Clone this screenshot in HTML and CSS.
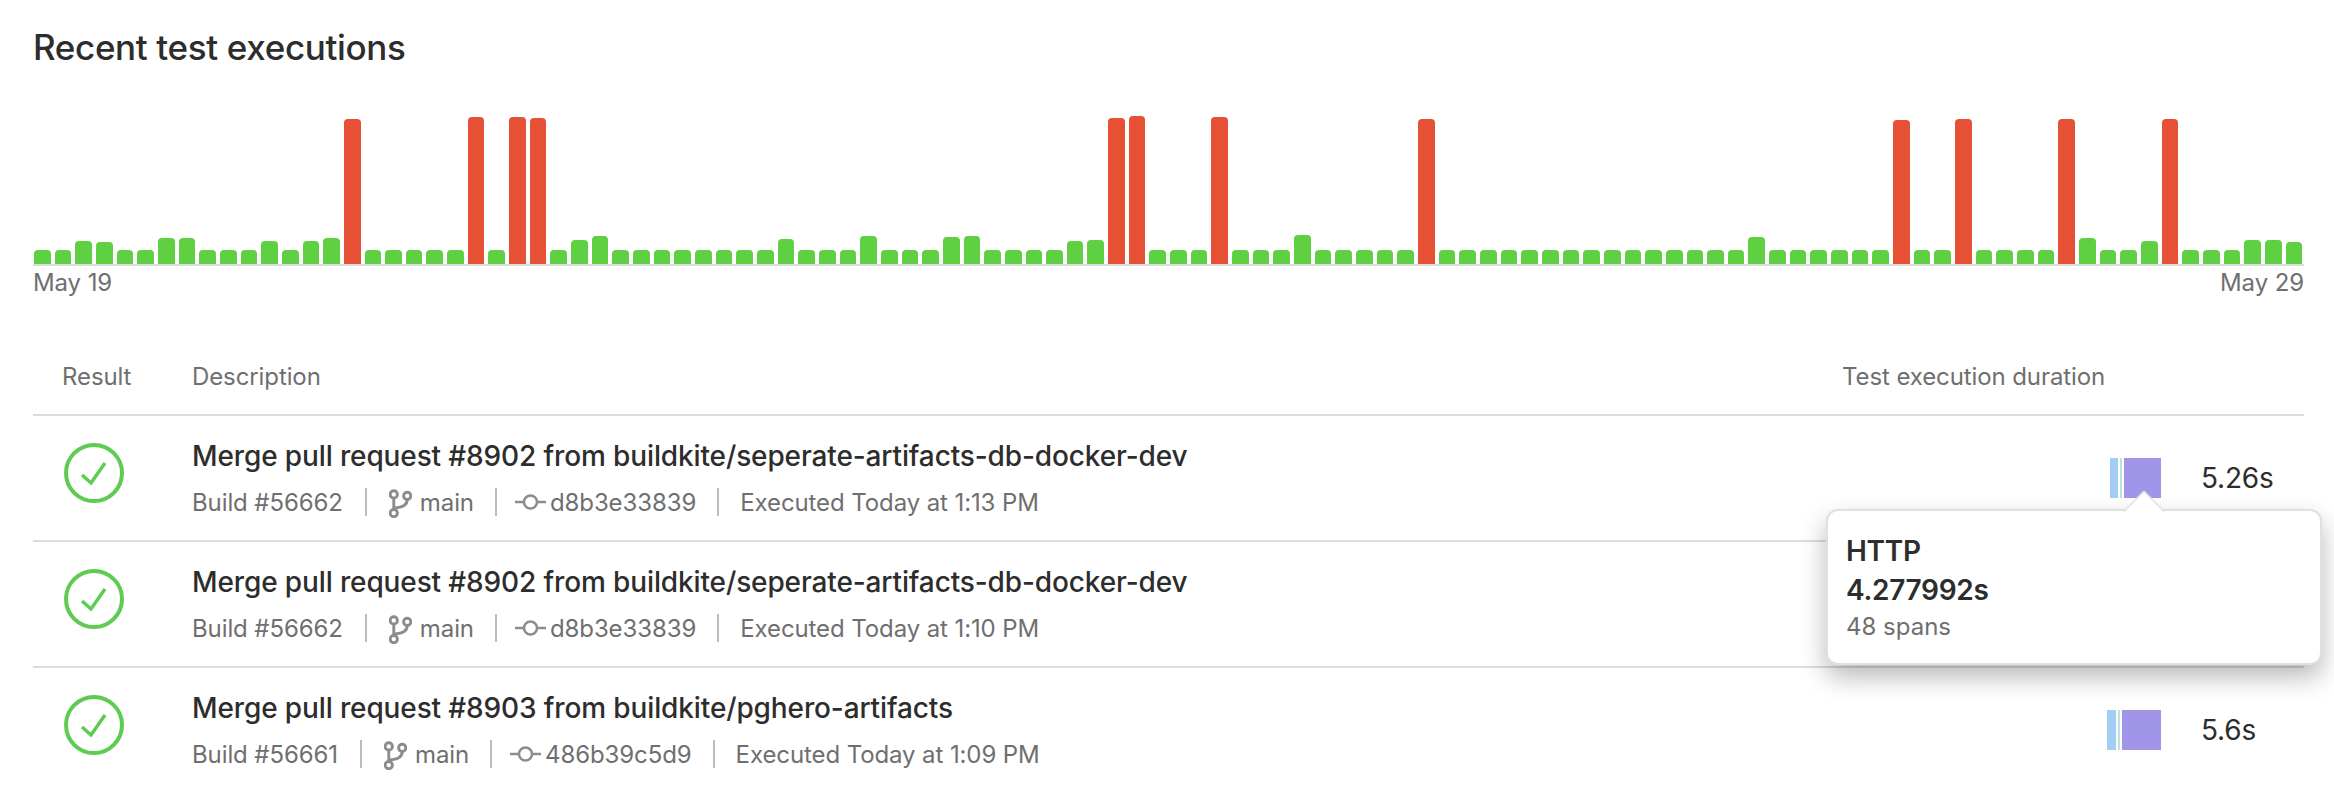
FILE: index.html
```html
<!DOCTYPE html>
<html lang="en">
<head>
<meta charset="utf-8">
<title>Recent test executions</title>
<link rel="stylesheet" href="styles.css">
</head>
<body>
<main class="page">
  <h1 class="heading">Recent test executions</h1>
  <section class="chart">
    <div class="bars">
      <i class="bar"></i><i class="bar"></i><i class="bar" style="height:23px"></i><i class="bar" style="height:22px"></i><i class="bar"></i><i class="bar"></i><i class="bar" style="height:26px"></i><i class="bar" style="height:26px"></i><i class="bar"></i><i class="bar"></i>
      <i class="bar"></i><i class="bar" style="height:23px"></i><i class="bar"></i><i class="bar" style="height:23px"></i><i class="bar" style="height:26px"></i><i class="bar fail" style="height:145px"></i><i class="bar"></i><i class="bar"></i><i class="bar"></i><i class="bar"></i>
      <i class="bar"></i><i class="bar fail" style="height:147px"></i><i class="bar"></i><i class="bar fail" style="height:147px"></i><i class="bar fail" style="height:146px"></i><i class="bar"></i><i class="bar" style="height:24px"></i><i class="bar" style="height:28px"></i><i class="bar"></i><i class="bar"></i>
      <i class="bar"></i><i class="bar"></i><i class="bar"></i><i class="bar"></i><i class="bar"></i><i class="bar"></i><i class="bar" style="height:25px"></i><i class="bar"></i><i class="bar"></i><i class="bar"></i>
      <i class="bar" style="height:28px"></i><i class="bar"></i><i class="bar"></i><i class="bar"></i><i class="bar" style="height:27px"></i><i class="bar" style="height:28px"></i><i class="bar"></i><i class="bar"></i><i class="bar"></i><i class="bar"></i>
      <i class="bar" style="height:23px"></i><i class="bar" style="height:24px"></i><i class="bar fail" style="height:146px"></i><i class="bar fail" style="height:148px"></i><i class="bar"></i><i class="bar"></i><i class="bar"></i><i class="bar fail" style="height:147px"></i><i class="bar"></i><i class="bar"></i>
      <i class="bar"></i><i class="bar" style="height:29px"></i><i class="bar"></i><i class="bar"></i><i class="bar"></i><i class="bar"></i><i class="bar"></i><i class="bar fail" style="height:145px"></i><i class="bar"></i><i class="bar"></i>
      <i class="bar"></i><i class="bar"></i><i class="bar"></i><i class="bar"></i><i class="bar"></i><i class="bar"></i><i class="bar"></i><i class="bar"></i><i class="bar"></i><i class="bar"></i>
      <i class="bar"></i><i class="bar"></i><i class="bar"></i><i class="bar" style="height:27px"></i><i class="bar"></i><i class="bar"></i><i class="bar"></i><i class="bar"></i><i class="bar"></i><i class="bar"></i>
      <i class="bar fail" style="height:144px"></i><i class="bar"></i><i class="bar"></i><i class="bar fail" style="height:145px"></i><i class="bar"></i><i class="bar"></i><i class="bar"></i><i class="bar"></i><i class="bar fail" style="height:145px"></i><i class="bar" style="height:26px"></i>
      <i class="bar"></i><i class="bar"></i><i class="bar" style="height:23px"></i><i class="bar fail" style="height:145px"></i><i class="bar"></i><i class="bar"></i><i class="bar"></i><i class="bar" style="height:24px"></i><i class="bar" style="height:24px"></i><i class="bar" style="height:22px"></i>
    </div>
    <div class="axis"><span>May 19</span><span>May 29</span></div>
  </section>

  <section class="table">
    <div class="row head">
      <div class="head-result">Result</div>
      <div>Description</div>
      <div>Test execution duration</div>
    </div>

    <div class="row item">
      <svg class="status" viewBox="0 0 60 60" aria-hidden="true"><circle cx="30" cy="30" r="28" /><path d="M18 32l9 8 14-20" /></svg>
      <div class="desc">
        <div class="title">Merge pull request #8902 from buildkite/seperate-artifacts-db-docker-dev</div>
        <div class="meta">
          <span class="cell">Build #56662</span>
          <span class="cell"><svg class="icon-branch" viewBox="0 0 24 30" aria-hidden="true"><circle cx="5" cy="5.500" r="3.800" /><circle cx="5" cy="25" r="3.800" /><circle cx="19" cy="7" r="3.800" /><path d="M5 9.300v11.900M19 10.800c0 6-4 8-14 9" /></svg>main</span>
          <span class="cell cell-commit"><svg class="icon-commit" viewBox="0 0 31 16" aria-hidden="true"><circle cx="15.500" cy="8" r="6.500" /><path d="M0 8h9M22 8h9" /></svg>d8b3e33839</span>
          <span class="cell">Executed Today at 1:13 PM</span>
        </div>
      </div>
      <div class="duration">
        <div class="spans">
          <i class="span http-a" style="width:8px"></i><i class="span sql" style="width:2px"></i><i class="span http" style="width:37px"></i>
        </div>
        <div class="time">5.26s</div>
        <div class="tooltip">
          <div class="tip-strong">HTTP</div>
          <div class="tip-strong">4.277992s</div>
          <div class="tip-note">48 spans</div>
        </div>
      </div>
    </div>

    <div class="row item">
      <svg class="status" viewBox="0 0 60 60" aria-hidden="true"><circle cx="30" cy="30" r="28" /><path d="M18 32l9 8 14-20" /></svg>
      <div class="desc">
        <div class="title">Merge pull request #8902 from buildkite/seperate-artifacts-db-docker-dev</div>
        <div class="meta">
          <span class="cell">Build #56662</span>
          <span class="cell"><svg class="icon-branch" viewBox="0 0 24 30" aria-hidden="true"><circle cx="5" cy="5.500" r="3.800" /><circle cx="5" cy="25" r="3.800" /><circle cx="19" cy="7" r="3.800" /><path d="M5 9.300v11.900M19 10.800c0 6-4 8-14 9" /></svg>main</span>
          <span class="cell cell-commit"><svg class="icon-commit" viewBox="0 0 31 16" aria-hidden="true"><circle cx="15.500" cy="8" r="6.500" /><path d="M0 8h9M22 8h9" /></svg>d8b3e33839</span>
          <span class="cell">Executed Today at 1:10 PM</span>
        </div>
      </div>
      <div class="duration"></div>
    </div>

    <div class="row item last">
      <svg class="status" viewBox="0 0 60 60" aria-hidden="true"><circle cx="30" cy="30" r="28" /><path d="M18 32l9 8 14-20" /></svg>
      <div class="desc">
        <div class="title">Merge pull request #8903 from buildkite/pghero-artifacts</div>
        <div class="meta">
          <span class="cell">Build #56661</span>
          <span class="cell"><svg class="icon-branch" viewBox="0 0 24 30" aria-hidden="true"><circle cx="5" cy="5.500" r="3.800" /><circle cx="5" cy="25" r="3.800" /><circle cx="19" cy="7" r="3.800" /><path d="M5 9.300v11.900M19 10.800c0 6-4 8-14 9" /></svg>main</span>
          <span class="cell cell-commit"><svg class="icon-commit" viewBox="0 0 31 16" aria-hidden="true"><circle cx="15.500" cy="8" r="6.500" /><path d="M0 8h9M22 8h9" /></svg>486b39c5d9</span>
          <span class="cell">Executed Today at 1:09 PM</span>
        </div>
      </div>
      <div class="duration">
        <div class="spans">
          <i class="span http-a" style="width:9px"></i><i class="span sql" style="width:2px"></i><i class="span http" style="width:39px"></i>
        </div>
        <div class="time">5.6s</div>
      </div>
    </div>
  </section>
</main>
</body>
</html>
```
FILE: styles.css
```css
* { box-sizing: border-box; }
html, body { margin: 0; height: 100%; background: #fff; }
body { overflow: hidden; font-family: Inter, "Liberation Sans", sans-serif; color: #2d2d2d; }

.page { padding: 27px 30px 0 33px; }

.heading { margin: 0; font-size: 35px; line-height: 40px; font-weight: 500; letter-spacing: -0.35px; color: #2d2d2d; }

.chart { margin-top: 47px; }
.bars { display: flex; align-items: flex-end; gap: 4px; height: 150px; padding: 0 2px 0 1px; border-bottom: 2px solid #dcdcdc; box-sizing: content-box; }
.bar { flex: 1 1 0; height: 14px; background: #5fd042; border-radius: 4px 4px 0 0; }
.fail { background: #e65034; }
.axis { display: flex; justify-content: space-between; margin-top: 3px; font-size: 24px; line-height: 28px; letter-spacing: -0.1px; color: #6f6f6f; }

.table { margin-top: 60px; }
.row { display: grid; grid-template-columns: 159px 1fr 462px; }
.head { height: 59px; font-size: 24px; line-height: 40px; letter-spacing: -0.1px; color: #6f6f6f; border-bottom: 2px solid #dcdcdc; }
.head-result { padding-left: 29px; }

.item { position: relative; height: 126px; border-bottom: 2px solid #dcdcdc; }
.last { border-bottom: 0; }

.status { width: 60px; height: 60px; margin: 27px 0 0 31px; }
.status circle { fill: none; stroke: #5ecb52; stroke-width: 4; }
.status path { fill: none; stroke: #5ecb52; stroke-width: 3.500; }

.desc { padding-top: 21px; }
.title { font-size: 28px; line-height: 38px; font-weight: 500; letter-spacing: -0.125px; color: #2d2d2d; white-space: nowrap; }
.meta { display: flex; align-items: center; margin-top: 13px; height: 28px; font-size: 24px; letter-spacing: -0.1px; color: #6f6f6f; white-space: nowrap; }
.cell { display: flex; align-items: center; height: 28px; padding: 0 21px 0 22px; border-left: 2px solid #bcbcbc; }
.cell:first-child { padding: 0 22px 0 0; border-left: 0; }
.cell:last-child { padding-left: 21px; }
.cell-commit { padding: 0 21px 0 18px; }

.icon-branch { width: 23px; height: 29px; margin: 3px 8px 0 0; }
.icon-branch circle, .icon-branch path { fill: none; stroke: #8c8c8c; stroke-width: 3; }
.icon-commit { width: 31px; height: 16px; margin-right: 4px; }
.icon-commit circle, .icon-commit path { fill: none; stroke: #8c8c8c; stroke-width: 2.500; }

.duration { position: relative; display: flex; justify-content: flex-end; align-items: flex-start; padding-top: 42px; }
.spans { display: flex; gap: 2px; height: 40px; margin-right: 40px; }
.span { display: block; height: 40px; }
.http-a { background: #a3cdf2; }
.sql { background: #b8e4dc; }
.http { background: #a095e8; }
.time { width: 103px; font-size: 28px; line-height: 40px; letter-spacing: -0.2px; color: #2d2d2d; }

.tooltip { position: absolute; z-index: 2; left: -16px; top: 93px; width: 496px; height: 156px; padding: 21px 18px; background: #fff; border: 2px solid #e0e0e0; border-radius: 12px; box-shadow: 0 12px 26px rgba(0, 0, 0, 0.28); }
.tooltip::before { content: ""; position: absolute; left: 301px; top: -15px; width: 28px; height: 28px; background: #fff; border-top: 2px solid #e4e4e4; border-left: 2px solid #e4e4e4; transform: rotate(45deg); border-radius: 3px 0 0 0; }
.tip-strong { position: relative; font-size: 28px; line-height: 39px; font-weight: 600; letter-spacing: -0.3px; color: #2d2d2d; }
.tip-note { font-size: 24px; line-height: 34px; color: #6f6f6f; }
```
